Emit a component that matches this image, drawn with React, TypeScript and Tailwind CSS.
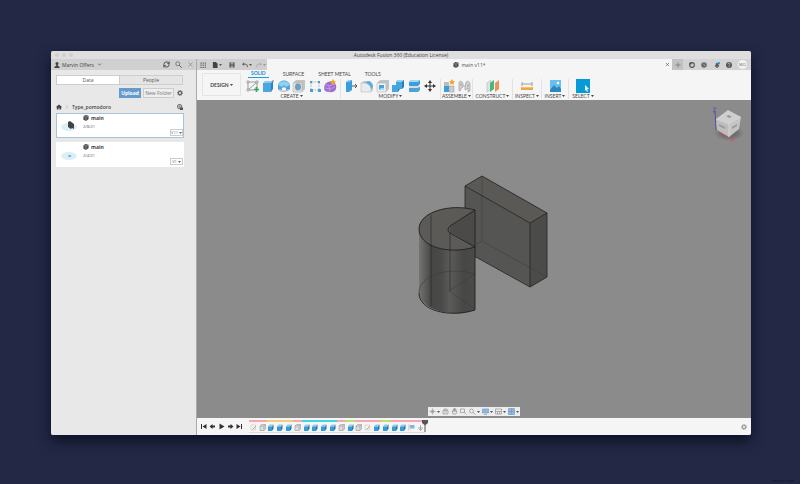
import type { ReactNode } from 'react'
import { ChevronDown, ChevronRight, RefreshCw, X } from 'lucide-react'

const tabs = ['SOLID', 'SURFACE', 'SHEET METAL', 'TOOLS']

const files = [
  { id: 'a', name: 'main', date: '2/8/21', version: 'V11', active: true },
  { id: 'b', name: 'main', date: '2/4/21', version: 'V1', active: false },
]

function Svg({ children, className = 'h-[14px] w-[14px]' }: { children: ReactNode; className?: string }) {
  return (
    <svg viewBox="0 0 14 14" className={`shrink-0 ${className}`} fill="none" aria-hidden="true">
      {children}
    </svg>
  )
}

function Cube({ className = 'h-[6px] w-[6px]' }: { className?: string }) {
  return (
    <Svg className={className}>
      <path d="M1 3 6 0l7 2v8l-6 4-6-3z" fill="#4b4b4b" />
      <path d="m1 3 6 2 6-3M7 5v9" stroke="#c8c8c8" />
    </Svg>
  )
}

function Gear({ color }: { color: string }) {
  return (
    <Svg className="h-[6px] w-[6px]">
      <circle cx="7" cy="7" r="4.300" stroke={color} strokeWidth="2.200" />
      <circle cx="7" cy="7" r="6.200" stroke={color} strokeWidth="1.600" strokeDasharray="2.400 2.469" />
      <circle cx="7" cy="7" r="1.200" fill={color} />
    </Svg>
  )
}

function Caret() {
  return (
    <svg viewBox="0 0 6 4" className="ml-px h-[2px] w-[3px] shrink-0" aria-hidden="true">
      <path d="M0 0h6L3 4z" fill="currentColor" />
    </svg>
  )
}

const icons = {
  sketch: (
    <Svg>
      <path d="M2 3h9M2 3v8M2 11h6M11 3v6M3 10l7-6" stroke="#777" strokeWidth=".7" />
      <path d="M1 2h2v2H1zM10 2h2v2h-2zM1 10h2v2H1z" fill="#fff" stroke="#777" strokeWidth=".6" />
      <path d="M10.500 8v5M8 10.500h5" stroke="#22ae55" strokeWidth="1.700" />
    </Svg>
  ),
  extrude: (
    <Svg>
      <path d="m2 4 2-2h8l-2 2z" fill="#8bcbef" />
      <path d="M2 4h8v9H2z" fill="#4ba6de" />
      <path d="m10 4 2-2v8l-2 3z" fill="#2f83bd" />
      <path d="M12 3V1" stroke="#666" strokeWidth=".8" />
    </Svg>
  ),
  revolve: (
    <Svg>
      <path d="M1 6c1-6 11-6 12 0v4l-4 1V9c-1-1-3-1-4 0v2l-4-1z" fill="#4ba6dd" />
      <path d="M1 6c1-5 11-5 12 0L9 8C8 6 6 6 5 8z" fill="#8fd0ee" />
      <path d="M1 10c3 3 8 3 12 0" stroke="#888" strokeWidth=".7" />
    </Svg>
  ),
  hole: (
    <Svg>
      <path d="m1 4 3-3h9v9l-3 3H1z" fill="#bfc3c5" />
      <path d="M1 4h9v9H1z" fill="#e1e3e4" stroke="#a4a8aa" strokeWidth=".5" />
      <ellipse cx="6" cy="8" rx="3" ry="3.400" fill="#8d9395" />
      <path d="M5 6h3v5H5z" fill="#58a9d8" />
    </Svg>
  ),
  pattern: (
    <Svg>
      <path d="M4 3h6M3 4v6M11 4v6M4 11h6" stroke="#888" strokeWidth=".6" strokeDasharray="1.500 1" />
      <path d="M2 2h2v2H2zM10 2h2v2h-2zM2 10h3v3H2zM10 10h3v3h-3z" fill="#459fd8" />
    </Svg>
  ),
  form: (
    <Svg>
      <path d="M2 5q4-4 9-2 3 3 2 7-2 4-7 3-5 0-5-4z" fill="#9d70d0" />
      <path d="m2 5 4 2 6-2M6 7l1 6M2 9l5 1 5-2" stroke="#c9aaf0" strokeWidth=".7" />
      <path d="m10 0 1 2 2 .500-1.500 1.300.500 2-2-1-2 1 .500-2L7 2.500 9 2z" fill="#f6a21b" />
    </Svg>
  ),
  press: (
    <Svg>
      <path d="m2 3 3-2h3v10l-3 2H2z" fill="#3b9edb" />
      <path d="m2 3 3-2h3L5 3z" fill="#94d0f1" />
      <path d="M8 7h5m-2-2 2 2-2 2" stroke="#555" />
    </Svg>
  ),
  fillet: (
    <Svg>
      <path d="m1 4 3-2h4c3 0 5 3 5 6v3l-2 2H1z" fill="#c3c7c9" />
      <path d="M1 4h4c3 0 6 3 6 6v3H1z" fill="#eaebec" stroke="#a9adaf" strokeWidth=".5" />
      <path d="m5 4 3-2c3 0 5 3 5 6l-2 2c0-3-3-6-6-6z" fill="#58aee0" />
    </Svg>
  ),
  shell: (
    <Svg>
      <path d="m1 4 3-3h9v9l-3 3H1z" fill="#bfc3c5" />
      <path d="M1 4h9v9H1z" fill="#edeeee" stroke="#a9adaf" strokeWidth=".5" />
      <path d="M3 6h5v5H3z" fill="#4aa4db" />
      <path d="m3 11 2-2h3v2z" fill="#a7daf4" />
    </Svg>
  ),
  combine: (
    <Svg>
      <path d="M5 3 7 1h6v7l-2 2H9l-2 3H1V6h4z" fill="#1f80bd" />
      <path d="M5 3h6v7H7v3H1V6h4z" fill="#45a5df" />
      <path d="m5 3 2-2h6l-2 2z" fill="#94d0f1" />
    </Svg>
  ),
  split: (
    <Svg>
      <path d="m2 3 2-2h9v4l-2 2H2z" fill="#3b9edb" />
      <path d="m2 3 2-2h9l-2 2z" fill="#a3daf4" />
      <path d="m2 9 2-1h9v3l-2 2H2z" fill="#4aa4db" />
      <path d="m2 8 2-1h9l-2 2H2z" fill="#d8dcde" />
    </Svg>
  ),
  move: (
    <Svg>
      <path d="M7 3v8M3 7h8" stroke="#333" />
      <path d="m7 1 2 3H5zM7 13l2-3H5zM1 7l3-2v4zM13 7l-3-2v4z" fill="#333" />
    </Svg>
  ),
  component: (
    <Svg>
      <path d="M2 3h5v4H2z" fill="#b8bdbf" />
      <path d="M2 7h5v6H2z" fill="#3b9edb" />
      <path d="M7 7h5v6H7z" fill="#c8ccce" stroke="#999" strokeWidth=".5" />
      <path d="m10 0 1 2 2 .500-1.500 1.300.500 2-2-1-2 1 .500-2L7 2.500 9 2z" fill="#f6a21b" />
    </Svg>
  ),
  joint: (
    <Svg>
      <path d="M2 12V4c0-3 4-2 4 1v3l-2 1v2zM8 11V8l1-5c2-2 4 0 4 2v7l-2 1V9z" fill="#cfd2d4" stroke="#999" strokeWidth=".6" />
      <path d="M4 4v3M11 5v3M6 7h2" stroke="#999" strokeWidth=".7" />
    </Svg>
  ),
  plane: (
    <Svg>
      <path d="m1 4 4-3v9l-4 3z" fill="#dfe1e2" stroke="#a6aaac" strokeWidth=".5" />
      <path d="m4 4 4-3v9l-4 3z" fill="#45b97c" />
      <path d="m9 4 4-3v9l-4 3z" fill="#ec9359" />
    </Svg>
  ),
  measure: (
    <Svg>
      <path d="M2 3v4M12 3v4M2 5h10" stroke="#888" strokeWidth=".8" />
      <path d="M1 8h12v3H1z" fill="#efa63d" />
      <path d="M3 8v1M5 8v1M7 8v1M9 8v1M11 8v1" stroke="#fff" strokeWidth=".6" />
    </Svg>
  ),
  insert: (
    <Svg>
      <path d="M2 1h11v12H2z" fill="#6abfed" />
      <path d="m2 11 4-5 3 3 2-2 2 3v3H2z" fill="#2b87bf" />
      <circle cx="10" cy="4" r="1.200" fill="#fff" />
    </Svg>
  ),
  select: (
    <Svg>
      <path d="M0 0h14v14H0z" fill="#069bd7" />
      <path d="m9 6 4 4-2 .300 1 2-1 .500-1-2-1 1z" fill="#fff" />
    </Svg>
  ),
}

const groups = [
  { label: 'CREATE', width: 'w-[95px] pr-[3px]', items: ['sketch', 'extrude', 'revolve', 'hole', 'pattern', 'form'] },
  { label: 'MODIFY', width: 'w-[100px] px-[3px]', items: ['press', 'fillet', 'shell', 'combine', 'split', 'move'] },
  { label: 'ASSEMBLE', width: 'w-[32px] px-px', items: ['component', 'joint'] },
  { label: 'CONSTRUCT', width: 'w-[40px]', items: ['plane'] },
  { label: 'INSPECT', width: 'w-[29px]', items: ['measure'] },
  { label: 'INSERT', width: 'w-[27px]', items: ['insert'] },
  { label: 'SELECT', width: 'w-[28px]', items: ['select'] },
] as { label: string; width: string; items: (keyof typeof icons)[] }[]

function DataPanel() {
  return (
    <aside className="flex w-[146px] shrink-0 flex-col border-r border-[#aaa] bg-[#e8e8e8]">
      <div className="flex h-[11px] items-center bg-[#d0d0d0] pr-[2px] pl-[3px] text-[#444]">
        <Svg className="mr-[2px] h-[6px] w-[6px]">
          <circle cx="7" cy="3.500" r="3.500" fill="#444" />
          <path d="M5 6h4v3l4 2v3H1v-3l4-2z" fill="#444" />
        </Svg>
        <button type="button" className="flex items-center gap-[3px] text-[5px] leading-[8px]">
          Marvin Offers
          <ChevronDown size={5} strokeWidth={3} />
        </button>
        <div className="ml-auto flex items-center gap-[5px]">
          <button type="button" aria-label="Refresh"><RefreshCw size={7} strokeWidth={3} /></button>
          <button type="button" aria-label="Search">
            <Svg className="h-[7px] w-[7px]">
              <circle cx="5.500" cy="5.500" r="4" stroke="#555" strokeWidth="1.300" />
              <path d="m8.500 8.500 5 5" stroke="#555" strokeWidth="1.800" />
            </Svg>
          </button>
          <button type="button" aria-label="Close panel" className="text-[#777]"><X size={7} strokeWidth={2} /></button>
        </div>
      </div>

      <div className="flex flex-col pt-[5px] pr-[13px] pl-[5px] text-[5px] leading-[8px] text-[#555]">
        <div className="flex h-[10px] border border-[#cdcdcd]">
          <button type="button" className="flex-1 bg-white">Data</button>
          <button type="button" className="flex-1 border-l border-[#cdcdcd] bg-[#e5e5e5]">People</button>
        </div>
        <div className="mt-[3px] flex items-center justify-end gap-[2px]">
          <button type="button" className="h-[10px] w-[22px] bg-[#649bcb] font-bold text-white">Upload</button>
          <button type="button" className="h-[10px] w-[31px] border border-[#ccc] bg-[#efefef] leading-[7px] text-[#777]">New Folder</button>
          <button type="button" aria-label="Settings" className="ml-px">
            <Gear color="#444" />
          </button>
        </div>
        <div className="mt-[5px] flex h-[8px] items-center gap-[2px] font-semibold text-[#444]">
          <Svg className="h-[6px] w-[6px]">
            <path d="M7 1 0 7l1 1 1-1v6h4V9h2v4h4V7l1 1 1-1z" fill="#444" />
          </Svg>
          <ChevronRight size={6} strokeWidth={2} className="text-[#999]" />
          Type_pomodoro
          <Svg className="ml-auto h-[6px] w-[6px]">
            <circle cx="6" cy="6" r="5" stroke="#555" strokeWidth="2" />
            <path d="M1 6h10M6 1v10" stroke="#555" />
            <path d="M7 8h7v6H7z" fill="#555" />
          </Svg>
        </div>
      </div>

      <ul className="mt-[2px] flex flex-col gap-[4px] pr-[12px] pl-[5px]">
        {files.map((f) => (
          <li
            key={f.id}
            className={`flex h-[25px] border bg-white ${f.active ? 'border-[#a8c3d8]' : 'border-white'}`}
          >
            <svg viewBox="0 0 22 22" className="ml-[2px] h-[22px] w-[22px]" aria-hidden="true">
              <ellipse cx="10" cy="13" rx="8" ry="4" fill="#dceef7" />
              {f.active ? (
                <path d="m9 8 2-1 4 3v5l-2-1-1 1-3-2z" fill="#444" />
              ) : (
                <path d="m8.500 13 2.500-.700 1.500.700-1.500.700z" fill="#447d9c" />
              )}
            </svg>
            <div className="flex flex-col gap-px pl-[2px] text-[5px] leading-[8px]">
              <span className="flex items-center gap-[2px] font-bold text-[#444]">
                <Cube />
                {f.name}
              </span>
              <span className="text-[4px] text-[#555]">{f.date}</span>
            </div>
            <button
              type="button"
              className="mb-px ml-auto flex h-[7px] w-[13px] items-center justify-center self-end border border-[#ccc] text-[4px] leading-[5px] text-[#666]"
            >
              {f.version}
              <Caret />
            </button>
          </li>
        ))}
      </ul>
    </aside>
  )
}

function TabBar() {
  return (
    <div className="flex h-[11px] bg-[#f5f5f5] text-[#555]">
      <div className="flex w-[70px] items-center bg-[#cfcfcf] pl-[3px]">
        <button type="button" aria-label="Data panel" className="mr-[6px]">
          <Svg className="h-[6px] w-[6px]">
            <path d="M1 1h3v3H1zM6 1h3v3H6zM11 1h3v3h-3zM1 6h3v3H1zM6 6h3v3H6zM11 6h3v3h-3zM1 11h3v3H1zM6 11h3v3H6zM11 11h3v3h-3z" fill="#666" />
          </Svg>
        </button>
        <button type="button" aria-label="File" className="mr-[7px] flex items-center">
          <Svg className="h-[6px] w-[6px]"><path d="M2 0h7l4 4v10H2z" fill="#444" /></Svg>
          <Caret />
        </button>
        <button type="button" aria-label="Save" className="mr-[7px]">
          <Svg className="h-[6px] w-[6px]">
            <path d="M1 1h12v12H1z" fill="#555" />
            <path d="M4 2h6v4H4zM4 9h6v4H4z" fill="#aaa" />
          </Svg>
        </button>
        <button type="button" aria-label="Undo" className="mr-[4px] flex items-center">
          <Svg className="h-[6px] w-[6px]">
            <path d="M3 5h5q5 0 5 7" stroke="#555" strokeWidth="2" />
            <path d="m0 5 5-4v8z" fill="#555" />
          </Svg>
          <Caret />
        </button>
        <button type="button" aria-label="Redo" className="flex items-center text-[#999]">
          <Svg className="h-[6px] w-[6px]">
            <path d="M11 5H6q-5 0-5 7" stroke="#aaa" strokeWidth="2" />
            <path d="m14 5-5-4v8z" fill="#aaa" />
          </Svg>
          <Caret />
        </button>
      </div>
      <div className="relative flex flex-1 items-center justify-center text-[5px] leading-[8px]">
        <span className="flex items-center gap-[2px]"><Cube />main v11*</span>
        <button type="button" aria-label="Close tab" className="absolute right-[2px]">
          <X size={5} strokeWidth={3} />
        </button>
      </div>
      <div className="flex w-[79px] items-center justify-between bg-[#d3d3d3] pr-[4px]">
        <button type="button" aria-label="New tab" className="flex h-full w-[11px] items-center justify-center bg-[#c2c2c2]">
          <Svg className="h-[6px] w-[6px]"><path d="M7 1v12M1 7h12" stroke="#888" strokeWidth="2.500" /></Svg>
        </button>
        <button type="button" aria-label="Extensions">
          <Svg className="h-[6px] w-[6px]">
            <circle cx="7" cy="7" r="5.500" stroke="#555" strokeWidth="2.500" />
            <path d="M1 1h5v5H1z" fill="#555" />
          </Svg>
        </button>
        <button type="button" aria-label="Job status">
          <Svg className="h-[6px] w-[6px]">
            <circle cx="7" cy="7" r="6.500" fill="#666" />
            <path d="M7 3v5l3 1" stroke="#bbb" strokeWidth="1.500" />
          </Svg>
        </button>
        <button type="button" aria-label="Notifications">
          <Svg className="h-[6px] w-[6px]">
            <path d="M2 11V9l2-2V4q3-5 6 0v3l2 2v2zM5 12h4v2H5z" fill="#555" />
            <circle cx="11" cy="3" r="3" fill="#1d9bd7" />
          </Svg>
        </button>
        <button type="button" aria-label="Help">
          <Svg className="h-[6px] w-[6px]">
            <circle cx="7" cy="7" r="7" fill="#555" />
            <path d="M4.500 5c0-3 5-3 5 0 0 2-2.500 1.500-2.500 4M7 10v2" stroke="#ddd" strokeWidth="1.500" />
          </Svg>
        </button>
        <button type="button" className="h-[9px] w-[9px] rounded-full bg-[#f2f2f2] text-[4px] leading-[9px] text-[#666]">
          MO
        </button>
      </div>
    </div>
  )
}

function Ribbon() {
  return (
    <div className="flex h-[30px] bg-[#f5f5f5] pl-[5px] font-['Lato','Open_Sans',sans-serif] text-[#444]">
      <button
        type="button"
        className="mt-[3px] flex h-[23px] w-[39px] shrink-0 items-center justify-center border border-[#e4e4e4] text-[5px] leading-[6px] font-bold"
      >
        DESIGN
        <Caret />
      </button>
      <div className="ml-[5px] flex flex-col">
        <nav className="flex h-[8px] gap-[14px] pl-[2px] text-[5px] leading-[7px]">
          {tabs.map((t) => (
            <button
              key={t}
              type="button"
              className={t === 'SOLID' ? 'border-b border-[#1f9ad6] px-[3px] font-bold text-[#1f8fcb]' : ''}
            >
              {t}
            </button>
          ))}
        </nav>
        <div className="flex pt-px">
          {groups.map((g) => (
            <div
              key={g.label}
              className={`flex flex-col items-center border-r border-[#e2e2e2] last:border-0 ${g.width}`}
            >
              <div className={`flex h-[14px] w-full items-center ${g.items.length > 1 ? 'justify-between' : 'justify-center'}`}>
                {g.items.map((name) => (
                  <button key={name} type="button" aria-label={name}>{icons[name]}</button>
                ))}
              </div>
              <button type="button" className="flex items-center text-[5px] leading-[6px] whitespace-nowrap">
                {g.label}
                <Caret />
              </button>
            </div>
          ))}
        </div>
      </div>
    </div>
  )
}

function Model() {
  return (
    <svg viewBox="0 0 130 140" className="h-[140px] w-[130px] overflow-visible" fill="none" aria-hidden="true">
      <defs>
        <linearGradient id="side" x1="0" x2="1">
          <stop offset="0" stopColor="#747472" />
          <stop offset=".22" stopColor="#464644" />
          <stop offset=".4" stopColor="#4a4a48" />
          <stop offset=".55" stopColor="#5b5b59" />
          <stop offset=".8" stopColor="#474745" />
          <stop offset="1" stopColor="#4b4b49" />
        </linearGradient>
      </defs>
      <path d="m46 10 17-10 65 37v64l-17 10-65-36z" fill="#555553" />
      <path d="m46 10 17-10 65 37-17 10z" fill="#5b5956" />
      <path d="m111 47 17-10v64l-17 10z" fill="#4b4b49" />
      <path d="M63 0v65L46 75M63 65l65 36" stroke="#3f3f3e" strokeWidth=".6" />
      <path d="m46 10 17-10 65 37v64l-17 10-65-36zM46 10l65 37v64M111 47l17-10" stroke="#252525" strokeWidth=".8" />

      <path d="M0 53v64c0 9 12 18 31 20 9 1 17 0 25-3V71z" fill="url(#side)" />
      <path d="M56 34c-25-7-56 2-56 19 0 18 30 26 56 18L31 56v-6z" fill="#5b5a57" />
      <path d="m31 50 25-16v37L31 56z" fill="#4b4a48" />
      <path d="M0 117c0-18 30-27 56-19l-26 17 26 18" stroke="#3a3a39" strokeWidth=".6" />
      <path d="M12 39v91M31 56v59" stroke="#2d2d2c" strokeWidth=".7" />
      <path
        d="M56 34c-25-7-56 2-56 19 0 18 30 26 56 18L31 57q-4-3 0-7zM56 34v100M0 117c0 18 31 25 56 17"
        stroke="#202020"
        strokeWidth=".9"
      />
    </svg>
  )
}

function ViewCube() {
  return (
    <svg viewBox="0 0 34 38" className="h-[38px] w-[34px]" fill="none" aria-hidden="true">
      <defs>
        <radialGradient id="shade">
          <stop offset=".5" stopColor="#6f6f6f" />
          <stop offset="1" stopColor="#6f6f6f" stopOpacity="0" />
        </radialGradient>
      </defs>
      <ellipse cx="18" cy="26" rx="15" ry="8" fill="url(#shade)" />
      <path d="m4 4 1 19" stroke="#514eb2" />
      <path d="M2 1h3L2 5h3" stroke="#514eb2" strokeWidth=".7" />
      <path d="m6 23 14 9" stroke="#ce4e5e" />
      <path d="m20 31 3 4m0-4-3 4" stroke="#ce4e5e" strokeWidth=".7" />
      <path d="m5 12 12-9 13 7-12 7z" fill="#cfcfcf" />
      <path d="m5 12 13 5v13L6 23z" fill="#bdbdbd" />
      <path d="m18 17 12-7-2 12-10 8z" fill="#c4c4c4" />
      <path d="m5 12 13 5 12-7M18 17v13" stroke="#dedede" strokeWidth=".7" />
      <path d="m15 9 3-1 3 2-3 1zM8 17l6 3v2l-6-3zM21 20l5-3v2l-5 3z" fill="#999" />
    </svg>
  )
}

const navTools = [
  { name: 'Orbit', d: 'M7 1v12M1 7h12M4 4l6 6M10 4l-6 6', caret: true },
  { name: 'Look at', d: 'M2 12h10V5H2zM4 5V2h6v3M4 8h6' },
  { name: 'Pan', d: 'M4 12 2 7l2 1V3h2v4V1h2v6V2h2v5h2l-2 5z' },
  { name: 'Zoom window', d: 'M1 2h8v7H1zM9 9l4 4' },
  { name: 'Zoom', d: 'M9 6a4 4 0 1 0-8 0 4 4 0 0 0 8 0zM8 9l5 4', caret: true },
  { name: 'Display', d: 'M1 2h12v8H1zM4 13h6', blue: true, caret: true },
  { name: 'Grid', d: 'M1 2h12v10H1zM1 7h12M5 7v5M9 7v5', caret: true },
  { name: 'Viewports', d: 'M1 1h12v12H1zM7 1v12M1 7h12', blue: true, caret: true },
]

function NavBar() {
  return (
    <div className="flex h-[9px] items-center gap-[2px] bg-[#ededed] px-px text-[#555]">
      {navTools.map((t) => (
        <button key={t.name} type="button" aria-label={t.name} className="flex items-center">
          <Svg className="h-[7px] w-[7px]">
            <path
              d={t.d}
              stroke={t.blue ? '#6f94bd' : '#888'}
              fill={t.blue ? '#8bb9e4' : 'none'}
              strokeWidth="1.200"
            />
          </Svg>
          {t.caret && <Caret />}
        </button>
      ))}
    </div>
  )
}

const features = [
  { kind: 'sketch', bar: 'bg-[#f3aaae]' },
  { kind: 'body', bar: 'bg-[#f3aaae]' },
  { kind: 'extrude', bar: 'bg-[#f2ce78]' },
  { kind: 'extrude', bar: 'bg-[#f2ce78]' },
  { kind: 'extrude', bar: 'bg-[#f2ce78]' },
  { kind: 'body', bar: 'bg-[#f3aaae]' },
  { kind: 'extrude', bar: 'bg-[#40d6dc]' },
  { kind: 'extrude', bar: 'bg-[#40d6dc]' },
  { kind: 'extrude', bar: 'bg-[#40d6dc]' },
  { kind: 'extrude', bar: 'bg-[#40d6dc]' },
  { kind: 'body', bar: 'bg-[#f3aaae]' },
  { kind: 'extrude', bar: 'bg-[#b4e767]' },
  { kind: 'body', bar: 'bg-[#f3aaae]' },
  { kind: 'sketch', bar: 'bg-[#f3aaae]' },
  { kind: 'extrude', bar: 'bg-[#f3aaae]' },
  { kind: 'extrude', bar: 'bg-[#b4e767]' },
  { kind: 'extrude', bar: 'bg-[#f3aaae]' },
  { kind: 'extrude', bar: 'bg-[#f3aaae]' },
  { kind: 'plane', bar: 'bg-[#f3aaae]' },
  { kind: 'move', bar: 'bg-[#f3aaae]' },
]

function FeatureIcon({ kind }: { kind: string }) {
  if (kind === 'extrude') {
    return (
      <Svg className="h-[7px] w-[7px]">
        <path d="m2 5 3-4h8l-3 4z" fill="#91ccef" />
        <path d="M2 5h8v9H2z" fill="#349cdb" />
        <path d="m10 5 3-4v8l-3 5z" fill="#2877ac" />
      </Svg>
    )
  }
  if (kind === 'body') {
    return (
      <Svg className="h-[7px] w-[7px]">
        <path d="m2 4 3-3h8v9l-3 3H2zM2 4h8v9M10 4l3-3" fill="#ddd" stroke="#888" />
      </Svg>
    )
  }
  if (kind === 'plane') {
    return (
      <Svg className="h-[7px] w-[7px]">
        <path d="M2 1v12" stroke="#888" />
        <path d="M4 2h9v7H4z" fill="#82b6df" />
      </Svg>
    )
  }
  if (kind === 'move') {
    return (
      <Svg className="h-[7px] w-[7px]">
        <path d="M7 2v11M2 8h10M4 10l3 3 3-3" stroke="#999" strokeWidth="1.500" />
      </Svg>
    )
  }
  return (
    <Svg className="h-[7px] w-[7px]">
      <path d="M2 2h9v10H2z" stroke="#bbb" />
      <path d="m5 11 7-7" stroke="#df9856" strokeWidth="2" />
    </Svg>
  )
}

const playback = [
  { name: 'Go to start', d: 'M2 2v10h2V2zM13 2v10L5 7z' },
  { name: 'Step back', d: 'M7 2v10L1 7zM7 5h5v4H7z' },
  { name: 'Play', d: 'M3 1v12l10-6z' },
  { name: 'Step forward', d: 'M7 2v10l6-5zM2 5h5v4H2z' },
  { name: 'Go to end', d: 'M10 2v10h2V2zM1 2v10l8-5z' },
]

function Timeline() {
  return (
    <div className="flex h-[17px] items-center bg-[#f5f5f5] pr-[4px] pl-[3px] text-[#555]">
      <div className="flex gap-[2px]">
        {playback.map((p) => (
          <button key={p.name} type="button" aria-label={p.name}>
            <Svg className="h-[7px] w-[7px]"><path d={p.d} fill="#333" /></Svg>
          </button>
        ))}
      </div>
      <div className="relative ml-[6px] flex w-[176px]">
        {features.map((f, i) => (
          <button
            key={i}
            type="button"
            aria-label={`Feature ${i + 1}`}
            className="flex flex-1 flex-col items-center border-b border-[#ddd] pb-px"
          >
            <span className={`mb-[2px] h-[2px] w-full ${f.bar}`} />
            <FeatureIcon kind={f.kind} />
          </button>
        ))}
        <svg viewBox="0 0 6 12" className="absolute right-[-3px] h-[12px] w-[6px]" aria-hidden="true">
          <path d="M0 0h6v3L3.500 5v7h-1V5L0 3z" fill="#555" />
        </svg>
      </div>
      <button type="button" aria-label="Timeline settings" className="ml-auto">
        <Gear color="#888" />
      </button>
    </div>
  )
}

export default function App() {
  return (
    <div className="relative flex min-h-screen bg-[#232945] pt-[51px] pr-[49px] pb-[49px] pl-[51px] font-['Open_Sans','Noto_Sans',sans-serif]">
      <main className="flex min-w-0 flex-1 flex-col overflow-hidden rounded-[2px] bg-[#8b8b8b] shadow-[0_6px_14px_#0b1024]">
        <header className="relative flex h-[8px] items-center justify-center bg-[#dedede] text-[5px] leading-[8px] text-[#444]">
          <div className="absolute left-[4px] flex gap-[3px]">
            <span className="h-[4px] w-[4px] rounded-full bg-[#cfcfcf]" />
            <span className="h-[4px] w-[4px] rounded-full bg-[#cfcfcf]" />
            <span className="h-[4px] w-[4px] rounded-full bg-[#cfcfcf]" />
          </div>
          <h1>Autodesk Fusion 360 (Education License)</h1>
        </header>
        <div className="flex flex-1">
          <DataPanel />
          <div className="flex min-w-0 flex-1 flex-col">
            <TabBar />
            <Ribbon />
            <section className="relative flex flex-1 flex-col items-center justify-between bg-[#8b8b8b] pt-[76px] pb-[2px]">
              <div className="pl-[20px]"><Model /></div>
              <div className="absolute top-[7px] right-[6px]"><ViewCube /></div>
              <NavBar />
            </section>
            <Timeline />
          </div>
        </div>
      </main>
      <span className="absolute right-[6px] bottom-0 text-[4px] leading-[6px] text-[#0a0d18]">artrcdn.com</span>
    </div>
  )
}
